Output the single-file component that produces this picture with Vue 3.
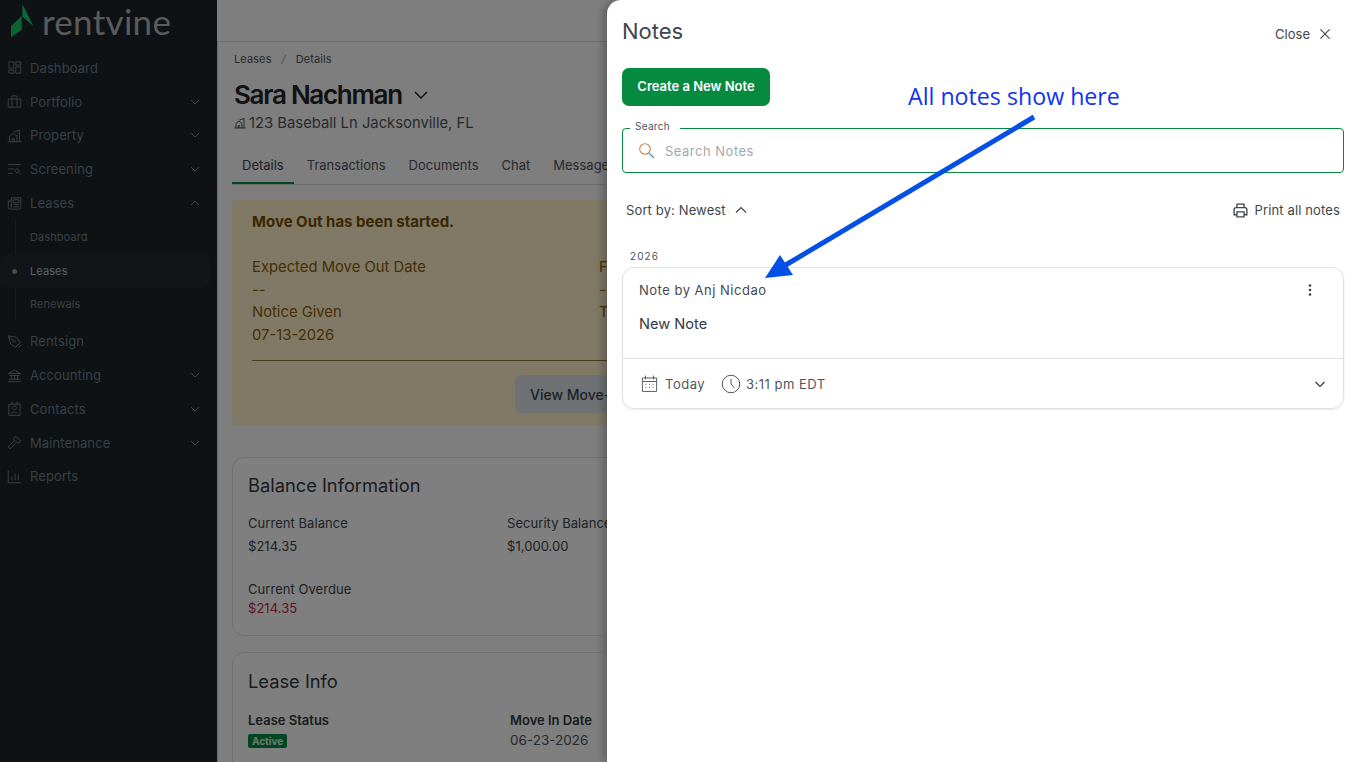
<script setup>
import { ref } from "vue";

const searchText = ref("");

const navItems = [
  { label: "Dashboard", icon: "M3 3h8v10H3zM14 3h8v5h-8zM3 16h8v5H3zM14 11h8v10h-8z" },
  { label: "Portfolio", caret: "down", icon: "M2 8h20v13H2zM8 8V4a1 1 0 0 1 1-1h6a1 1 0 0 1 1 1v4M8 8v13M16 8v13" },
  { label: "Property", caret: "down", icon: "M1 22h22M4 22v-9l6-5 6 5v9M8.500 22v-5h3v5M11 6l9-3v19M16 8h1M16 12h1" },
  { label: "Screening", caret: "down", icon: "M2 4h20M2 11h9M2 18h7M16 17a3 3 0 1 0-.01 0zM18.500 16.500L22 20" },
  { label: "Leases", caret: "up", icon: "M7 3h15v16a2 2 0 0 1-2 2H4a2 2 0 0 1-2-2V8h5M7 3v16M10 6h9v5h-9zM10 14h9M10 17.500h9" },
  { label: "Dashboard", sub: true },
  { label: "Leases", sub: true, active: true },
  { label: "Renewals", sub: true },
  { label: "Rentsign", icon: "M2 3l13 2 6 9-7 7-8-5zM2 3l8 8M11.500 13.500a2 2 0 1 0-.01 0zM14 21l7-7M18 22l4-4" },
  { label: "Accounting", caret: "down", icon: "M2 9l10-6 10 6zM4 12h16M7 12v6M12 12v6M17 12v6M3 18h18M2 22h20" },
  { label: "Contacts", caret: "down", icon: "M3 5h18v18H3zM8 1v5M16 1v5M12 14a3 3 0 1 0-.01 0zM7 20c.5-3 9.500-3 10 0" },
  { label: "Maintenance", caret: "down", icon: "M10 6l4-4 8 8-3 3-2-1-3-1-3-3zM11 10L2 19l3 3 9-9" },
  { label: "Reports", icon: "M2 2v20h20M8 18v-6M13 18V7M18 18v-9" }
];

const tabs = ["Details", "Transactions", "Documents", "Chat", "Messages"];
</script>

<template>
  <div class="page">
    <aside class="sidebar">
      <div class="brand">
        <svg class="brand-mark" width="24" height="34" viewBox="0 0 24 34">
          <path d="M11.300 0L22.300 22 11.300 12.500z" fill="#16cf6a" />
          <path d="M10.700 12L0 22v11.300L10.700 26z" fill="#14c865" />
        </svg>
        <span class="brand-name">rentvine</span>
      </div>
      <nav class="nav">
        <div
          v-for="(item, i) in navItems"
          :key="i"
          class="nav-row"
          :class="{ sub: item.sub, active: item.active }"
        >
          <template v-if="item.sub">
            <span class="sub-rail"></span>
            <span v-if="item.active" class="sub-dot"></span>
          </template>
          <svg v-else class="nav-icon" width="15" height="15" viewBox="0 0 24 24" fill="none" stroke="currentColor" stroke-width="1.400">
            <path :d="item.icon" />
          </svg>
          <span class="nav-label">{{ item.label }}</span>
          <svg v-if="item.caret" class="nav-caret" width="12" height="12" viewBox="0 0 12 12" fill="none" stroke="currentColor" stroke-width="1">
            <path :d="item.caret === 'up' ? 'M2 8l4-4 4 4' : 'M2 4l4 4 4-4'" />
          </svg>
        </div>
      </nav>
    </aside>

    <main class="main">
      <div class="topbar"></div>
      <div class="content">
        <div class="crumbs"><span>Leases</span><i>/</i><span>Details</span></div>
        <h1 class="lease-title">
          Sara Nachman
          <svg width="16" height="16" viewBox="0 0 16 16" fill="none" stroke="currentColor" stroke-width="1.500"><path d="M2 5l6 6 6-6" /></svg>
        </h1>
        <div class="address">
          <svg width="12" height="12" viewBox="0 0 24 24" fill="none" stroke="currentColor" stroke-width="2"><path d="M1 22h22M4 22v-9l6-5 6 5v9M8.500 22v-5h3v5M11 6l9-3v19" /></svg>
          123 Baseball Ln Jacksonville, FL
        </div>
        <div class="tabs">
          <span v-for="(tab, i) in tabs" :key="tab" class="tab" :class="{ current: i === 0 }">{{ tab }}</span>
        </div>

        <section class="alert">
          <div class="alert-title">Move Out has been started.</div>
          <div class="alert-grid">
            <div>
              <div>Expected Move Out Date</div>
              <div>--</div>
              <div>Notice Given</div>
              <div>07-13-2026</div>
            </div>
            <div>
              <div>Final Move Out Date</div>
              <div>--</div>
              <div>Termination Date</div>
            </div>
          </div>
          <div class="alert-foot">
            <button class="ghost-btn" type="button">View Move-Out</button>
          </div>
        </section>

        <section class="card balance">
          <h2>Balance Information</h2>
          <div class="balance-grid">
            <div>
              <div class="k">Current Balance</div>
              <div class="v">$214.35</div>
            </div>
            <div>
              <div class="k">Security Balance</div>
              <div class="v">$1,000.00</div>
            </div>
            <div class="overdue">
              <div class="k">Current Overdue</div>
              <div class="red">$214.35</div>
            </div>
          </div>
        </section>

        <section class="card lease-info">
          <h2>Lease Info</h2>
          <div class="info-grid">
            <div>
              <div class="bk">Lease Status</div>
              <span class="badge">Active</span>
            </div>
            <div>
              <div class="bk">Move In Date</div>
              <div class="date">06-23-2026</div>
            </div>
          </div>
        </section>
      </div>
    </main>

    <div class="scrim"></div>

    <aside class="drawer">
      <header class="drawer-head">
        <h2>Notes</h2>
        <button class="close" type="button">
          Close
          <svg width="10" height="10" viewBox="0 0 12 12" fill="none" stroke="currentColor" stroke-width="1.300"><path d="M.5.5l11 11M11.500.5l-11 11" /></svg>
        </button>
      </header>
      <button class="create" type="button">Create a New Note</button>

      <div class="search">
        <label>Search</label>
        <svg width="17" height="17" viewBox="0 0 17 17" fill="none" stroke="#66707a" stroke-width="1.100">
          <circle cx="7" cy="7" r="5.300" stroke="#b98a5c" />
          <path d="M11 11l5 5" stroke="#5f86b5" />
        </svg>
        <input v-model="searchText" placeholder="Search Notes" />
      </div>

      <div class="sort-row">
        <span class="sort">
          Sort by: Newest
          <svg width="12" height="12" viewBox="0 0 12 12" fill="none" stroke="currentColor" stroke-width="1.200"><path d="M1 8.500l5-5 5 5" /></svg>
        </span>
        <span class="print">
          <svg width="17" height="17" viewBox="0 0 24 24" fill="none" stroke="currentColor" stroke-width="1.900">
            <path d="M7 8V3h10v5M7 18H3v-7a3 3 0 0 1 3-3h12a3 3 0 0 1 3 3v7h-4M7 14h10v7H7z" />
          </svg>
          Print all notes
        </span>
      </div>

      <div class="year">2026</div>
      <article class="note">
        <div class="note-body">
          <div class="note-by">
            <span>Note by Anj Nicdao</span>
            <svg width="4" height="14" viewBox="0 0 4 14" fill="#3a3f45">
              <circle cx="2" cy="2.500" r="1.300" /><circle cx="2" cy="7" r="1.300" /><circle cx="2" cy="11.500" r="1.300" />
            </svg>
          </div>
          <p>New Note</p>
        </div>
        <div class="note-foot">
          <svg width="19" height="19" viewBox="0 0 24 24" fill="none" stroke="currentColor" stroke-width="1.200">
            <path d="M3 5h18v17H3zM3 9.500h18M7 2v5M17 2v5" />
            <path d="M7 13h1M11.500 13h1M16 13h1M7 17h1M11.500 17h1M16 17h1" stroke-width="1.600" />
          </svg>
          <span class="today">Today</span>
          <svg width="20" height="20" viewBox="0 0 24 24" fill="none" stroke="currentColor" stroke-width="1.200">
            <circle cx="12" cy="12" r="10.500" /><path d="M12 6v6l4 4.500" />
          </svg>
          <span class="time">3:11 pm EDT</span>
          <svg class="foot-caret" width="12" height="12" viewBox="0 0 12 12" fill="none" stroke="currentColor" stroke-width="1.200"><path d="M1.500 4l4.500 4.500L10.500 4" /></svg>
        </div>
      </article>
    </aside>

    <!-- annotation added on top of the screenshot -->
    <div class="callout">All notes show here</div>
    <svg class="arrow" width="1355" height="762" viewBox="0 0 1355 762">
      <path d="M1034 117L784 266" stroke="#0450e6" stroke-width="5" fill="none" />
      <path d="M765 278L780 255 793 275z" fill="#0450e6" />
    </svg>
  </div>
</template>

<style scoped>
.page {
  position: relative;
  display: flex;
  width: 100%;
  height: 762px;
  overflow: hidden;
  font-family: Inter, "Liberation Sans", sans-serif;
  background: #ffffff;
  color: #212529;
}

/* sidebar */
.sidebar {
  flex: 0 0 217px;
  background: #1c2428;
  color: #70808f;
}
.brand {
  display: flex;
  align-items: flex-start;
  height: 51px;
  box-sizing: border-box;
  padding: 4px 0 0 11px;
}
.brand-name {
  margin: -3px 0 0 7px;
  font-family: Lato, sans-serif;
  font-size: 35px;
  line-height: 40px;
  color: #b4b6b8;
  letter-spacing: 0.3px;
}
.nav-row {
  position: relative;
  display: flex;
  align-items: center;
  height: 33.800px;
  padding: 0 15px 0 7px;
  font-size: 13px;
}
.nav-icon {
  flex: none;
  margin-right: 8px;
  color: #7e888c;
}
.nav-label {
  flex: 1;
  letter-spacing: 0.1px;
}
.nav-caret {
  flex: none;
  color: #7f8a96;
  margin-right: 1px;
}
.nav-row.sub {
  padding-left: 30px;
  font-size: 11px;
}
.sub-rail {
  position: absolute;
  left: 15px;
  top: 0;
  bottom: 0;
  width: 1px;
  background: #323a3f;
}
.nav-row.active {
  margin-right: 7px;
  border-radius: 8px;
  background: #222a30;
  color: #b9c0c8;
}
.nav-row.active .sub-rail {
  display: none;
}
.sub-dot {
  position: absolute;
  left: 12px;
  top: 15px;
  width: 5px;
  height: 5px;
  border-radius: 50%;
  background: #8d96a0;
}
.nav-row:nth-child(8) {
  margin-bottom: 3px;
}

/* main content */
.main {
  flex: 1;
  min-width: 0;
  background: #fcfcfc;
  box-shadow: inset 1px 0 0 #d0d0d0;
}
.topbar {
  height: 41px;
  border-bottom: 1px solid #dcdee0;
  background: #ffffff;
}
.content {
  width: 734px;
  padding: 10px 0 0 17px;
}
.crumbs {
  display: flex;
  gap: 10px;
  height: 14px;
  font-size: 11px;
  line-height: 14px;
  letter-spacing: 0.1px;
  color: #50565c;
}
.crumbs i {
  color: #9ca0a4;
}
.lease-title {
  display: flex;
  align-items: center;
  gap: 11px;
  height: 36px;
  margin: 10px 0 0;
  font-size: 26px;
  font-weight: 600;
  letter-spacing: -1.300px;
  color: #212529;
}
.lease-title svg {
  margin-top: 1px;
}
.address {
  display: flex;
  align-items: center;
  gap: 3px;
  height: 20px;
  margin-top: 1px;
  font-size: 14.800px;
  color: #50565c;
}
.tabs {
  display: flex;
  gap: 3px;
  height: 39px;
  margin: 12px 0 0 -2px;
  border-bottom: 1px solid #d4d6d8;
  white-space: nowrap;
}
.tab {
  box-sizing: border-box;
  padding: 0 10px;
  font-size: 13px;
  line-height: 41px;
  height: 39px;
  color: #50565c;
}
.tab.current {
  color: #40464c;
  border-bottom: 2px solid #058a44;
}
.alert {
  box-sizing: border-box;
  margin: 15px 0 0 -2px;
  height: 226px;
  padding: 11px 20px 0;
  border-radius: 4px;
  background: #fff3cd;
  color: #8a6208;
  font-size: 14.800px;
  line-height: 22.400px;
}
.alert-title {
  font-weight: 700;
  font-size: 15px;
  color: #755004;
}
.alert-grid {
  display: grid;
  grid-template-columns: 347px 1fr;
  margin-top: 23px;
  padding-bottom: 14px;
  border-bottom: 1px solid #8a7a40;
}
.alert-foot {
  display: flex;
  justify-content: flex-end;
  margin-top: 14px;
}
.ghost-btn {
  width: 240px;
  height: 38px;
  margin-right: 193px;
  padding: 0 15px;
  border: 0;
  border-radius: 7px;
  background: #dfe4e8;
  font: 500 14px Inter, sans-serif;
  color: #3a4450;
  text-align: left;
}
.card {
  box-sizing: border-box;
  border: 1px solid #e0e2e4;
  border-radius: 12px;
  background: #ffffff;
  margin-left: -2px;
  padding: 0 15px;
}
.card h2 {
  margin: 0;
  font-size: 18.300px;
  font-weight: 400;
  color: #343a40;
}
.balance {
  margin-top: 31px;
  height: 179px;
  padding-top: 16px;
}
.balance h2 {
  line-height: 22px;
}
.balance-grid {
  display: grid;
  grid-template-columns: 259px 1fr;
  margin-top: 19px;
  font-size: 13px;
  letter-spacing: 0.05px;
  color: #40464c;
}
.k {
  line-height: 17px;
}
.v {
  margin-top: 6px;
  line-height: 17px;
}
.overdue {
  grid-column: 1 / 3;
  margin-top: 26px;
}
.red {
  margin-top: 2px;
  line-height: 17px;
  color: #c8283c;
}
.lease-info {
  margin-top: 16px;
  height: 180px;
  padding-top: 17px;
}
.lease-info h2 {
  line-height: 22px;
}
.info-grid {
  display: grid;
  grid-template-columns: 262px 1fr;
  margin-top: 20px;
  font-size: 13px;
}
.bk {
  font-weight: 600;
  line-height: 17px;
  color: #343a40;
}
.badge {
  display: block;
  width: 39px;
  box-sizing: border-box;
  margin-top: 5px;
  padding: 0 4px;
  border-radius: 2px;
  background: #058a44;
  color: #d8f0e0;
  font-size: 10px;
  font-weight: 700;
  line-height: 14px;
}
.date {
  margin-top: 3px;
  font-size: 13.500px;
  color: #50565c;
}

.scrim {
  position: absolute;
  inset: 0;
  background: rgba(0, 0, 0, 0.5);
}

/* notes drawer */
.drawer {
  position: absolute;
  top: 0;
  right: 0;
  bottom: 0;
  width: 748px;
  box-sizing: border-box;
  padding: 0 11px 0 15px;
  border-top-left-radius: 14px;
  background: #ffffff;
  box-shadow: -4px 0 8px rgba(0, 0, 0, 0.25);
}
.drawer-head {
  display: flex;
  align-items: center;
  justify-content: space-between;
  height: 62px;
  padding-right: 14px;
}
.drawer-head h2 {
  margin: 0;
  font-size: 22px;
  font-weight: 400;
  color: #40464c;
}
.close {
  display: flex;
  align-items: center;
  gap: 10px;
  margin-top: 6px;
  padding: 0;
  border: 0;
  background: none;
  font: 13px Inter, sans-serif;
  color: #40464c;
}
.create {
  display: block;
  width: 148px;
  height: 38px;
  margin-top: 6px;
  padding: 0 0 2px;
  border: 0;
  border-radius: 7px;
  background: #058a40;
  color: #ffffff;
  font: 600 13px Inter, sans-serif;
}
.search {
  position: relative;
  display: flex;
  align-items: center;
  gap: 10px;
  height: 45px;
  box-sizing: border-box;
  margin-top: 22px;
  padding-left: 15px;
  border: 1px solid #058a40;
  border-radius: 4px;
}
.search label {
  position: absolute;
  left: 7px;
  top: -9px;
  padding: 0 5px;
  width: 40px;
  background: #ffffff;
  font-size: 10px;
  line-height: 12px;
  letter-spacing: 0.3px;
  color: #50565c;
}
.search input {
  flex: 1;
  border: 0;
  outline: 0;
  padding: 0;
  margin-top: 1px;
  background: none;
  font: 13px Inter, sans-serif;
  letter-spacing: 0.5px;
}
.search input::placeholder {
  color: #a4a8ac;
  opacity: 1;
}
.sort-row {
  display: flex;
  align-items: center;
  justify-content: space-between;
  margin-top: 28px;
  padding: 0 4px;
  font-size: 13px;
  line-height: 18px;
  letter-spacing: 0.13px;
  color: #40464c;
}
.sort,
.print {
  display: flex;
  align-items: center;
}
.sort {
  gap: 9px;
}
.print {
  gap: 6px;
}
.year {
  margin: 31px 0 0 8px;
  font-size: 10px;
  line-height: 12px;
  letter-spacing: 1.100px;
  color: #50565c;
}
.note {
  margin-top: 5px;
  border: 1px solid #e0e0e0;
  border-radius: 12px;
  box-shadow: 0 1px 2px rgba(0, 0, 0, 0.08);
}
.note-body {
  box-sizing: border-box;
  height: 91px;
  padding: 13px 16px 0;
  border-bottom: 1px solid #e0e0e0;
}
.note-by {
  display: flex;
  align-items: center;
  justify-content: space-between;
  padding-right: 15px;
  font-size: 13px;
  line-height: 18px;
  letter-spacing: 0.5px;
  color: #45494e;
}
.note-body p {
  margin: 16px 0 0;
  font-size: 14.600px;
  line-height: 18px;
  color: #343a40;
}
.note-foot {
  display: flex;
  align-items: center;
  height: 49px;
  padding: 0 17px 0 17px;
  font-size: 13px;
  letter-spacing: 0.5px;
  color: #50565c;
}
.today {
  margin: 0 16px 0 6px;
}
.time {
  margin-left: 5px;
}
.foot-caret {
  margin-left: auto;
  color: #343a40;
}

/* annotation */
.callout {
  position: absolute;
  left: 908px;
  top: 81px;
  font-family: "Open Sans", sans-serif;
  font-size: 23.200px;
  line-height: 30px;
  color: #0f33f0;
  white-space: nowrap;
}
.arrow {
  position: absolute;
  left: 0;
  top: 0;
  pointer-events: none;
}
</style>
